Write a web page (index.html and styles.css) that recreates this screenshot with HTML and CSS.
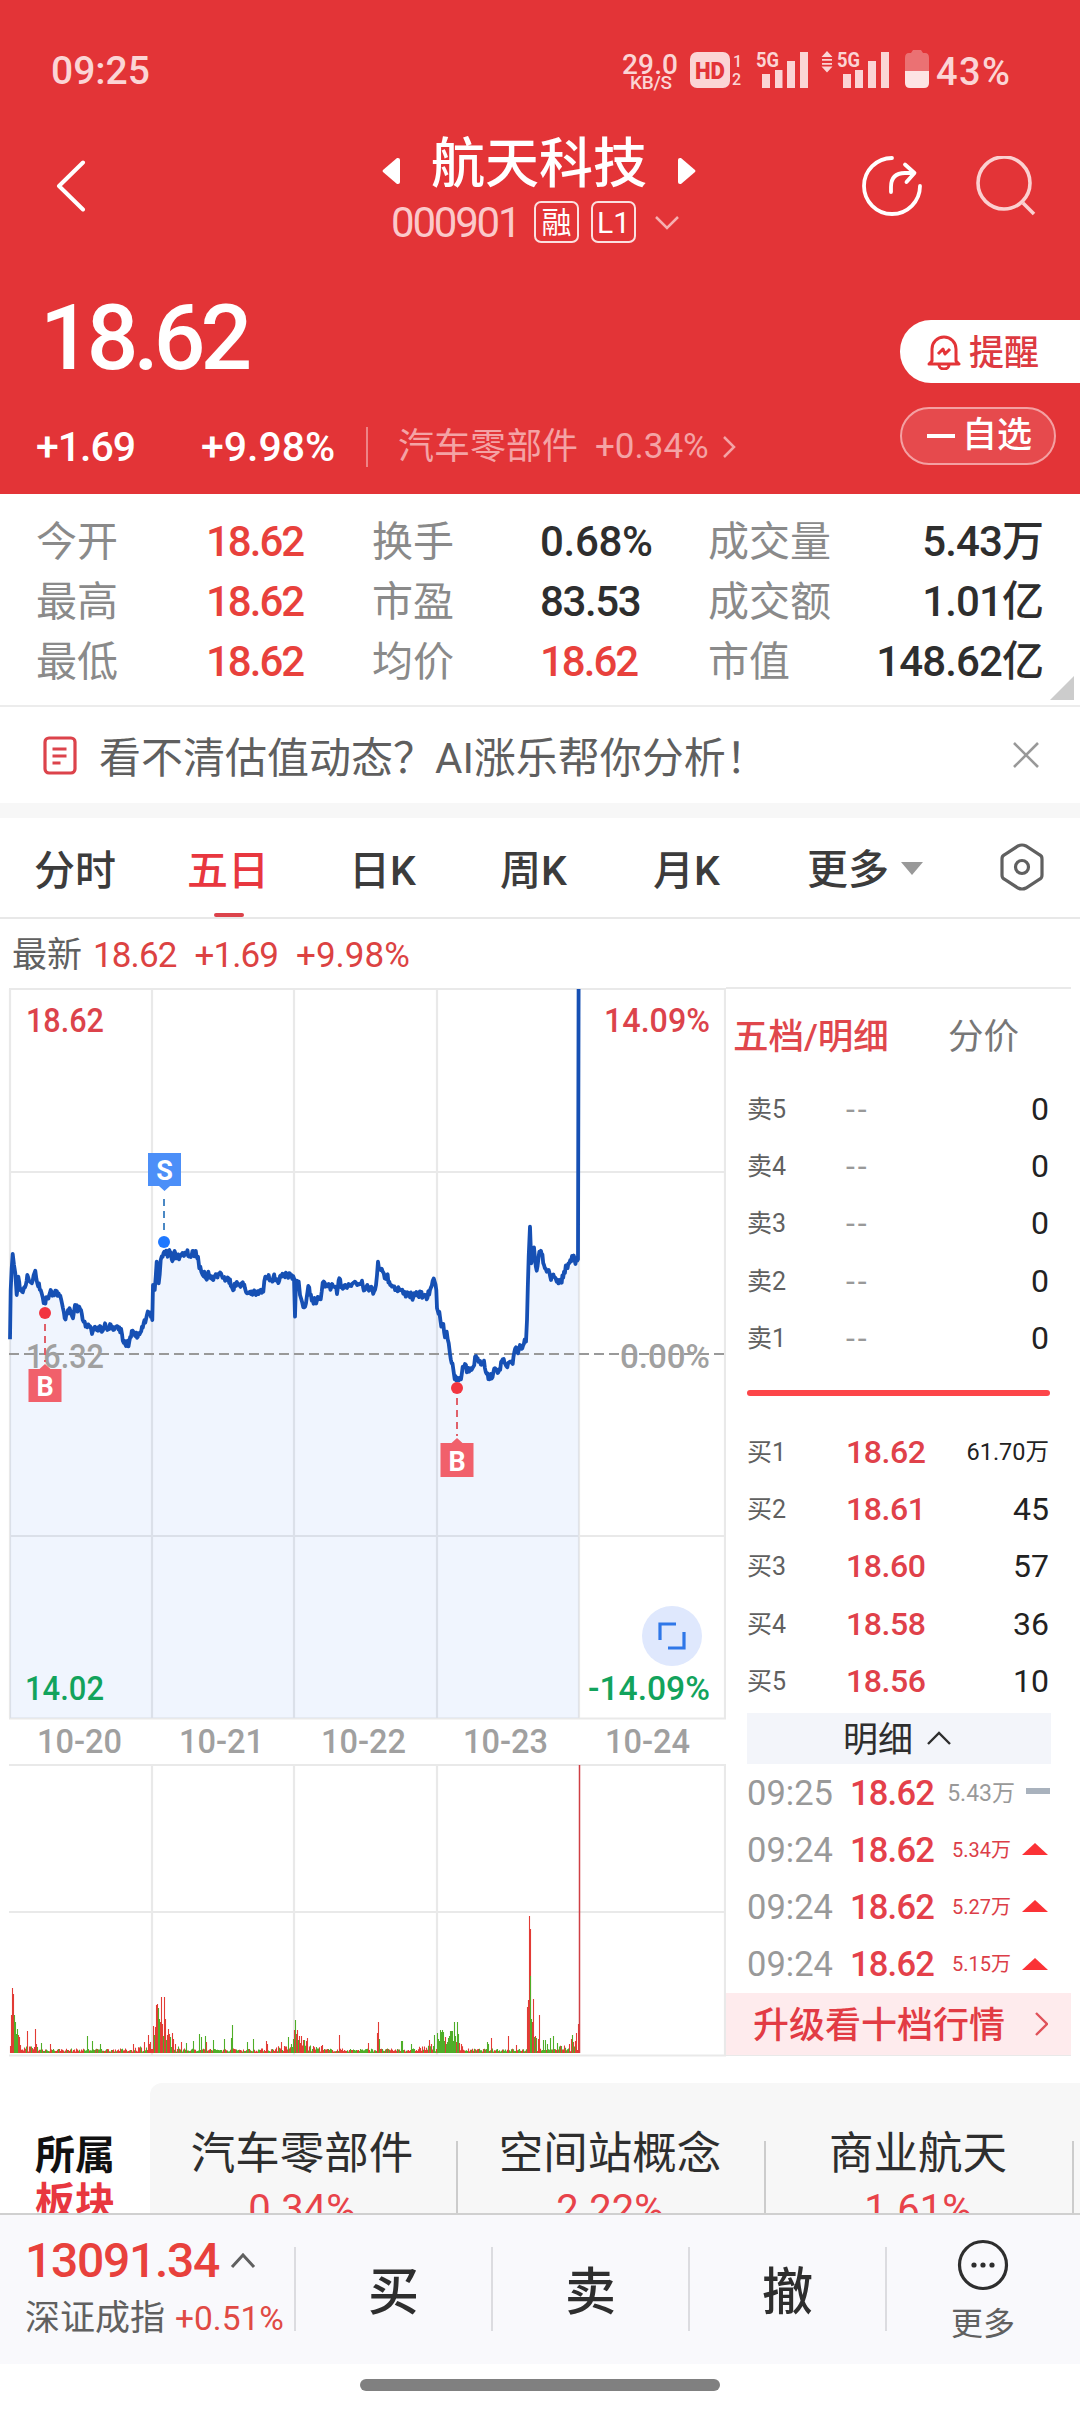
FILE: index.html
```html
<!DOCTYPE html>
<html lang="zh-CN">
<head>
<meta charset="utf-8">
<title>航天科技 000901</title>
<link rel="stylesheet" href="styles.css">
</head>
<body>
<div class="app">
  <header class="header">
    <div class="statusbar">
      <span class="clock">09:25</span>
      <svg class="status-icons" width="410" height="46" viewBox="615 46 410 46">
        <text x="622" y="73.5" font-size="28" font-weight="500" textLength="56">29.0</text>
        <text x="630" y="89" font-size="19" font-weight="500" textLength="42">KB/S</text>
        <rect x="690" y="52" width="40" height="36" rx="7"/>
        <text class="cut" x="695" y="79" font-size="24" font-weight="900" textLength="30" lengthAdjust="spacingAndGlyphs">HD</text>
        <text x="733" y="67" font-size="16" font-weight="500">1</text>
        <text x="732" y="84.500" font-size="16" font-weight="500">2</text>
        <text x="756" y="67" font-size="21" font-weight="700" textLength="23" lengthAdjust="spacingAndGlyphs">5G</text>
        <path d="M762 74h8v14h-8zM775 70h7.500v18h-7.500zM787 61h8v27h-8zM800 52h8v36h-8z"/>
        <path d="M827 51l5.500 6h-11zM827 72.500l5.500-6h-11zM822 59h10v1.800h-10zM822 63h10v1.800h-10z"/>
        <text x="837" y="67" font-size="21" font-weight="700" textLength="23" lengthAdjust="spacingAndGlyphs">5G</text>
        <path d="M843 74h8v14h-8zM855 70h8v18h-8zM868 61h8v27h-8zM881 52h8v36h-8z"/>
        <path opacity=".38" d="M913 50h8l2 3h2q4 0 4 5v13h-24v-13q0-5 4-5h2z"/>
        <path class="charge" d="M905 71h24v12q0 5-5 5h-14q-5 0-5-5z"/>
        <text x="936" y="85" font-size="38" font-weight="500" textLength="74">43%</text>
      </svg>
    </div>
    <div class="nav">
      <svg class="back" width="32" height="52" viewBox="0 0 32 52"><path d="M29 2.500L5 26l24 23.500"/></svg>
      <div class="stock">
        <div class="stock-name">
          <svg width="18" height="28" viewBox="0 0 18 28"><path d="M18 3v22q0 2-2 2h-1L1 15q-1-1 0-2L15 1h1q2 0 2 2z"/></svg>
          <h1>航天科技</h1>
          <svg width="18" height="28" viewBox="0 0 18 28"><path d="M0 3v22q0 2 2 2h1l14-12q1-1 0-2L3 1H2Q0 1 0 3z"/></svg>
        </div>
        <div class="stock-code">
          <span class="code">000901</span><span class="badge">融</span><span class="badge">L1</span>
          <svg width="24" height="14" viewBox="0 0 24 14"><path d="M1 1l11 11L23 1"/></svg>
        </div>
      </div>
      <div class="nav-tools">
        <svg class="share" width="60" height="60" viewBox="0 0 60 60"><path d="M30 2A28 28 0 1 0 58 30M29 36v-5q0-14 14-14h9M43 8.500l9.500 8.500-8 9"/></svg>
        <svg class="search" width="60" height="60" viewBox="0 0 60 60"><circle cx="28" cy="27" r="26"/><path d="M47 47l11 11"/></svg>
      </div>
    </div>
    <div class="quote">
      <div class="price">18.62</div>
      <div class="alert-btn">
        <svg width="34" height="36" viewBox="0 0 34 36"><path d="M5 27V15a12 12 0 0 1 24 0v12l3 3H2zM12 31a5 4 0 0 0 10 0M11 20l5-5 2 5 5-5"/></svg>
        <span>提醒</span>
      </div>
    </div>
    <div class="change">
      <span class="delta">+1.69</span><span class="delta-pct">+9.98%</span><i class="bar"></i>
      <span class="sector">汽车零部件</span><span class="sector-pct">+0.34%</span>
      <svg width="14" height="24" viewBox="0 0 14 24"><path d="M2 2l10 10L2 22"/></svg>
      <div class="watch-btn"><i></i>自选</div>
    </div>
  </header>

  <section class="stats">
    <span class="k">今开</span><span class="v up">18.62</span><span class="k">换手</span><span class="v pct">0.68%</span><span class="k">成交量</span><span class="v r">5.43万</span>
    <span class="k">最高</span><span class="v up">18.62</span><span class="k">市盈</span><span class="v">83.53</span><span class="k">成交额</span><span class="v r">1.01亿</span>
    <span class="k">最低</span><span class="v up">18.62</span><span class="k">均价</span><span class="v up">18.62</span><span class="k">市值</span><span class="v r">148.62亿</span>
    <i class="corner"></i>
  </section>

  <section class="tip">
    <svg width="34" height="40" viewBox="0 0 34 40"><rect x="2" y="2" width="30" height="35" rx="4"/><path d="M9.500 13h14M9.500 20h14M9.500 27h8"/></svg>
    <span>看不清估值动态？AI涨乐帮你分析！</span>
    <svg class="close" width="28" height="28" viewBox="0 0 28 28"><path d="M2 2l24 24M26 2L2 26"/></svg>
  </section>

  <nav class="tabs">
    <span class="tab">分时</span><span class="tab active">五日</span><span class="tab">日K</span><span class="tab">周K</span><span class="tab">月K</span>
    <span class="tab more">更多<i></i></span>
    <svg class="gear" width="44" height="48" viewBox="0 0 44 48"><path d="M22 2q2 0 4 1l14 9q2 1 2 4v16q0 3-2 4l-14 9q-4 2-8 0L4 36q-2-1-2-4V16q0-3 2-4l14-9q2-1 4-1z"/><circle cx="22" cy="24" r="6.500"/></svg>
  </nav>

  <div class="latest"><span class="lbl">最新</span><span>18.62</span><span>+1.69</span><span class="wide">+9.98%</span></div>

  <main class="market">
    <svg class="chart" width="726" height="1070" viewBox="0 987 726 1070">
      <g class="grid">
        <path d="M9 989H726M10 1172H725M10 1536H725M9 1718.500H726M9 1765H726M9 1912H725M9 2055.500H726"/>
        <path d="M10 989v729M152 989v729M294 989v729M437 989v729M579 989v729M725 989v729M152 1765v290M294 1765v290M437 1765v290M725 1765v290"/>
      </g>
      <path id="area" class="area"/>
      <path class="mid" d="M9 1354H724"/>
      <path id="line" class="line"/>
      <path id="volUp" class="vol-up"/>
      <path id="volDown" class="vol-down"/>
      <path class="vol-last" d="M579.500 1765V2053"/>
      <g class="axis">
        <text class="c-up" x="26" y="1032" textLength="78" lengthAdjust="spacingAndGlyphs">18.62</text>
        <text class="c-up" x="604" y="1032" textLength="106" lengthAdjust="spacingAndGlyphs">14.09%</text>
        <text class="c-mid" x="26" y="1368" textLength="78" lengthAdjust="spacingAndGlyphs">16.32</text>
        <text class="c-mid" x="620" y="1368" textLength="90" lengthAdjust="spacingAndGlyphs">0.00%</text>
        <text class="c-down" x="25" y="1700" textLength="79" lengthAdjust="spacingAndGlyphs">14.02</text>
        <text class="c-down" x="588" y="1700" textLength="122" lengthAdjust="spacingAndGlyphs">-14.09%</text>
        <text class="c-mid" x="37" y="1753" textLength="85" lengthAdjust="spacingAndGlyphs">10-20</text>
        <text class="c-mid" x="179" y="1753" textLength="85" lengthAdjust="spacingAndGlyphs">10-21</text>
        <text class="c-mid" x="321" y="1753" textLength="85" lengthAdjust="spacingAndGlyphs">10-22</text>
        <text class="c-mid" x="463" y="1753" textLength="85" lengthAdjust="spacingAndGlyphs">10-23</text>
        <text class="c-mid" x="605" y="1753" textLength="85" lengthAdjust="spacingAndGlyphs">10-24</text>
      </g>
      <g class="mark-s">
        <path class="lead" d="M164 1199v36"/><circle cx="164" cy="1242" r="6"/>
        <path d="M148 1153h33v33h-11l-5.500 5-5.500-5h-11z"/><text x="164.500" y="1180">S</text>
      </g>
      <g class="mark-b">
        <path class="lead" d="M45 1324v38"/><circle cx="45" cy="1313" r="6"/>
        <path d="M28.500 1369h11l5.500-5 5.500 5h11v33h-33z"/><text x="45" y="1396">B</text>
      </g>
      <g class="mark-b">
        <path class="lead" d="M457 1398v38"/><circle cx="457" cy="1388" r="6"/>
        <path d="M440.500 1443h11l5.500-5 5.500 5h11v34h-33z"/><text x="457" y="1471">B</text>
      </g>
      <g class="expand"><circle cx="672" cy="1636" r="30"/><path d="M676 1624h-16v16M684 1632v16h-16"/></g>
    </svg>

    <aside class="book">
      <div class="book-tabs"><span class="on">五档/明细</span><span>分价</span></div>
      <div class="row"><span>卖5</span><span class="none">--</span><b>0</b></div>
      <div class="row"><span>卖4</span><span class="none">--</span><b>0</b></div>
      <div class="row"><span>卖3</span><span class="none">--</span><b>0</b></div>
      <div class="row"><span>卖2</span><span class="none">--</span><b>0</b></div>
      <div class="row"><span>卖1</span><span class="none">--</span><b>0</b></div>
      <div class="ratio"></div>
      <div class="row"><span>买1</span><em>18.62</em><b class="small">61.70万</b></div>
      <div class="row"><span>买2</span><em>18.61</em><b>45</b></div>
      <div class="row"><span>买3</span><em>18.60</em><b>57</b></div>
      <div class="row"><span>买4</span><em>18.58</em><b>36</b></div>
      <div class="row"><span>买5</span><em>18.56</em><b>10</b></div>
      <div class="detail-head"><span>明细</span><svg width="24" height="14" viewBox="0 0 24 14"><path d="M1 13L12 2l11 11"/></svg></div>
      <div class="tick"><span>09:25</span><em>18.62</em><b class="flat">5.43万</b><i class="dash"></i></div>
      <div class="tick"><span>09:24</span><em>18.62</em><b>5.34万</b><i class="tri"></i></div>
      <div class="tick"><span>09:24</span><em>18.62</em><b>5.27万</b><i class="tri"></i></div>
      <div class="tick"><span>09:24</span><em>18.62</em><b>5.15万</b><i class="tri"></i></div>
      <div class="upgrade"><span>升级看十档行情</span><svg width="14" height="24" viewBox="0 0 14 24"><path d="M2 1l11 11L2 23"/></svg></div>
    </aside>
  </main>

  <section class="sectors">
    <div class="sectors-title"><span>所属</span><span class="red">板块</span></div>
    <div class="sectors-list">
      <div class="item"><span>汽车零部件</span><em>0.34%</em></div>
      <div class="item"><span>空间站概念</span><em>2.22%</em></div>
      <div class="item"><span>商业航天</span><em>1.61%</em></div>
    </div>
  </section>

  <footer class="trade">
    <div class="index">
      <div class="index-val">13091.34<svg width="26" height="16" viewBox="0 0 26 16"><path d="M2 14L13 2l11 12"/></svg></div>
      <div class="index-name">深证成指<em>+0.51%</em></div>
    </div>
    <div class="act">买</div><div class="act">卖</div><div class="act">撤</div>
    <div class="act-more">
      <svg width="52" height="52" viewBox="0 0 52 52"><circle class="ring" cx="26" cy="26" r="23.500"/><circle cx="17" cy="26" r="2.600"/><circle cx="26" cy="26" r="2.600"/><circle cx="35" cy="26" r="2.600"/></svg>
      <span>更多</span>
    </div>
  </footer>
  <div class="home"><i></i></div>
</div>
<script src="chart.js"></script>
</body>
</html>
```
FILE: styles.css
```css
* { box-sizing: border-box; margin: 0; padding: 0; }
body {
  width: 1080px;
  background: #fff;
  font-family: Roboto, "Noto Sans CJK SC", sans-serif;
  color: #2e2e2e;
}
.app { width: 1080px; height: 2412px; display: flex; flex-direction: column; overflow: hidden; }
.app > * { flex: none; }
svg { display: block; fill: none; flex: none; }
em, i { font-style: normal; }
span, em, b { white-space: nowrap; }

/* header */
.header { height: 494px; background: #e33437; color: #fff; }
.statusbar { height: 118px; padding: 24px 55px 0 51px; display: flex; justify-content: space-between; align-items: center; }
.clock { font-size: 39px; font-weight: 500; color: #fbd5d5; line-height: 46px; }
.status-icons { fill: #fbd5d5; margin-top: -4px; }
.status-icons .cut { fill: #e33437; }
.status-icons .charge { fill: #fde4e4; }
.nav { height: 136px; display: flex; padding: 0 44px 0 54px; justify-content: space-between; }
.back { stroke: #fff; stroke-width: 4; margin-top: 42px; stroke-linecap: round; stroke-linejoin: round; }
.stock { width: 320px; margin-left: 136px; }
.stock-name { display: flex; align-items: center; height: 79px; gap: 31px; padding-top: 15px; }
.stock-name svg { fill: #fff; margin-top: 11px; }
.stock-name h1 { font-size: 54px; font-weight: 500; line-height: 64px; width: 216px; }
.stock-code { display: flex; align-items: center; height: 50px; padding: 2px 0 0 9px; }
.code { font-size: 42px; letter-spacing: -2.200px; color: #fbc9ca; width: 143px; line-height: 46px; }
.badge { width: 45px; height: 42px; border: 2px solid #fbe0e0; border-radius: 7px; font-size: 30px; line-height: 39px; text-align: center; margin-right: 12px; margin-top: -3px; }
.stock-code svg { stroke: #f6b0b1; stroke-width: 2.500; margin-left: 7px; }
.nav-tools { display: flex; gap: 54px; margin-top: 38px; }
.share { stroke: #fff; stroke-width: 3.800; stroke-linecap: round; stroke-linejoin: round; }
.search { stroke: #fbd0d0; stroke-width: 3.600; }
.quote { height: 146px; display: flex; justify-content: space-between; align-items: flex-start; }
.price { font-size: 91px; font-weight: 500; letter-spacing: -5px; line-height: 100px; margin: 34px 0 0 40px; }
.alert-btn { margin-top: 66px; width: 180px; height: 63px; background: #fff; border-radius: 31px 0 0 31px; display: flex; align-items: center; padding-left: 27px; gap: 8px; color: #dd3a41; font-size: 35px; font-weight: 500; line-height: 63px; }
.alert-btn svg { stroke: #e33437; stroke-width: 3; stroke-linejoin: round; }
.alert-btn span { padding-top: 3px; }
.change { display: flex; align-items: center; height: 94px; padding-left: 36px; font-size: 41px; font-weight: 500; }
.delta { width: 165px; letter-spacing: -1px; }
.delta-pct { width: 165px; }
.change > span { line-height: 48px; }
.bar { width: 2px; height: 40px; background: #ee8486; }
.change .sector { font-size: 36px; font-weight: 400; color: #f4a3a5; margin-left: 30px; width: 197px; }
.change .sector-pct { font-size: 35px; font-weight: 400; color: #f4a3a5; width: 127px; }
.change > svg { stroke: #f4a3a5; stroke-width: 2.500; }
.watch-btn { margin-left: 164px; margin-top: -22px; width: 156px; height: 58px; border: 2px solid #f4a0a2; border-radius: 29px; background: #e64a4d; font-size: 35px; line-height: 58px; display: flex; align-items: center; padding-left: 25px; gap: 7px; white-space: nowrap; }
.watch-btn i { width: 28px; height: 3.500px; background: #fff; }

/* key figures */
.stats { position: relative; height: 213px; padding: 18px 38px 0 36px; border-bottom: 2px solid #ececec; display: grid; grid-template-columns: 170px 166px 168px 168px 120px 1fr; grid-auto-rows: 60px; line-height: 60px; font-size: 41px; }
.k { color: #8a8a8a; }
.v { font-weight: 500; font-size: 42px; letter-spacing: -1.400px; }
.v.up { color: #e8413c; letter-spacing: -2px; }
.v.pct { letter-spacing: -.300px; }
.v.r { text-align: right; letter-spacing: -.900px; margin-right: -1px; }
.corner { position: absolute; right: 6px; bottom: 5px; border-left: 24px solid transparent; border-bottom: 24px solid #ccc; }

/* hint */
.tip { height: 111px; border-bottom: 15px solid #f7f7f7; display: flex; align-items: center; padding: 4px 40px 0 43px; font-size: 42px; color: #5f5f5f; }
.tip svg { stroke: #dc434b; stroke-width: 3.200; margin-top: -3px; }
.tip span { margin-left: 22px; flex: 1; line-height: 60px; padding-top: 3px; }
.tip .close { stroke: #999; stroke-width: 2.600; margin-top: -4px; }

/* period tabs */
.tabs { height: 101px; border-bottom: 2px solid #e8e8e8; display: flex; align-items: center; font-size: 41px; line-height: 99px; color: #3c3c3c; padding-left: 34px; font-weight: 500; }
.tab { position: relative; width: 153px; height: 99px; padding-top: 4px; }
.tab:nth-child(2) { width: 162px; }
.tab:nth-child(3) { width: 151px; }
.tab.active { color: #e8373f; }
.tab.active::after { content: ""; position: absolute; left: 27px; bottom: 0; width: 30px; height: 4px; background: #dc434b; border-radius: 2px; }
.tab.more { display: flex; align-items: center; gap: 12px; width: 194px; padding: 4px 0 0 1px; line-height: 104px; }
.tab.more i { border: 11px solid transparent; border-top: 13px solid #999; border-bottom: 0; margin-top: -2px; }
.gear { stroke: #606060; stroke-width: 3.200; margin-top: -1px; }

.latest { height: 68px; display: flex; align-items: center; padding: 6px 0 0 12px; font-size: 35px; color: #dc4242; line-height: 64px; letter-spacing: -.900px; }
.latest span { margin-right: 18px; }
.latest .lbl { color: #606060; margin-right: 11px; letter-spacing: 0; }
.latest .wide { letter-spacing: 0; }

/* chart */
.market { display: flex; height: 1070px; }
.grid { stroke: #e9e9e9; stroke-width: 2.200; }
.area { fill: #2f6ff6; fill-opacity: .07; }
.line { stroke: #1650b4; stroke-width: 3.800; stroke-linejoin: round; }
.mid { stroke: #999; stroke-width: 2; stroke-dasharray: 10 5; }
.vol-up { stroke: #e23b35; stroke-width: 1.100; }
.vol-down { stroke: #4fae28; stroke-width: 1.100; }
.vol-last { stroke: #cf3f44; stroke-width: 1.500; }
.axis text { font-size: 33px; font-weight: 500; }
.c-up { fill: #dc434b; }
.c-mid { fill: #a0a0a0; }
.c-down { fill: #12a35c; }
.mark-s { fill: #4c8ff8; }
.mark-b { fill: #f1606b; }
.mark-b circle { fill: #f23540; }
.mark-s circle { fill: #1f78ff; }
.mark-s text, .mark-b text { fill: #fff; font-size: 27px; font-weight: 700; text-anchor: middle; }
.lead { stroke-width: 2; stroke-dasharray: 7 5; }
.mark-s .lead { stroke: #4a88c4; }
.mark-b .lead { stroke: #e0606a; }
.expand circle { fill: #dfe8fd; }
.expand path { stroke: #2f77e8; stroke-width: 3.200; }

/* order book */
.book { width: 345px; height: 1069px; border-top: 2px solid #e9e9e9; border-bottom: 2px solid #e9e9e9; }
.book-tabs { display: flex; justify-content: space-between; height: 92px; padding: 2px 52px 0 7px; font-size: 35.500px; line-height: 92px; color: #777; }
.book-tabs .on { color: #e0474c; font-weight: 500; }
.row { display: grid; grid-template-columns: 99px 100px 1fr; height: 57.200px; line-height: 57.200px; padding: 0 22px 0 21px; align-items: center; font-size: 25px; color: #606060; }
.row em { font-size: 32px; color: #e0414a; font-weight: 500; letter-spacing: -.400px; }
.row b { font-size: 32px; font-weight: 400; color: #222; text-align: right; }
.row b.small { font-size: 23.500px; margin-left: -30px; }
.row .none { font-size: 32px; color: #999; letter-spacing: 3px; }
.ratio { height: 6px; margin: 23px 21px 28px; border-radius: 3px; background: #fd4549; }
.detail-head { margin: 3px 20px 0 21px; height: 51px; background: #f3f5fa; display: flex; align-items: center; justify-content: center; gap: 14px; padding-right: 4px; font-size: 35px; line-height: 51px; color: #2e2e2e; }
.detail-head span { padding-top: 5px; }
.detail-head svg { stroke: #2e2e2e; stroke-width: 2.400; }
.tick { position: relative; top: 1px; display: grid; grid-template-columns: 103px 90px 1fr 35px; height: 57.200px; line-height: 57.200px; padding: 0 21px 0 21px; align-items: center; font-size: 34.500px; color: #999; }
.tick em { color: #e4404a; font-weight: 500; letter-spacing: -.800px; }
.tick b { font-weight: 400; font-size: 20px; color: #dc3e48; text-align: right; padding-right: 4px; margin-left: -20px; }
.tick b.flat { font-size: 23px; color: #999; padding-right: 0; }
.tick i { justify-self: end; }
.dash { width: 24px; height: 6px; background: #a9b2bd; margin-top: -4px; }
.tri { border: 13px solid transparent; border-bottom: 12px solid #fb3236; border-top: 0; margin-right: 2px; margin-top: -3px; }
.upgrade { height: 62px; background: #feebed; display: flex; align-items: center; justify-content: space-between; padding: 0 23px 0 27px; font-size: 36px; line-height: 62px; color: #e23b44; font-weight: 500; }
.upgrade span { padding-top: 4px; }
.upgrade svg { stroke: #e0525a; stroke-width: 2.400; }

/* related sectors */
.sectors { display: flex; height: 156px; padding-top: 26px; overflow: hidden; }
.sectors-title { width: 150px; flex: none; padding: 49px 0 0 35px; display: flex; flex-direction: column; font-size: 40px; line-height: 47px; font-weight: 700; color: #111; }
.sectors-title .red { color: #e8373f; }
.sectors-list { flex: 1; display: flex; background: #f7f7f7; border-radius: 12px 0 0 0; overflow: hidden; }
.item { position: relative; width: 308px; flex: none; text-align: center; display: flex; flex-direction: column; padding: 43px 4px 0 0; font-size: 44.500px; line-height: 56px; color: #2e2e2e; }
.item em { font-size: 40px; line-height: 56px; color: #e8434a; }
.item::after { content: ""; position: absolute; right: 0; top: 58px; bottom: 0; width: 2px; background: #ccc; }

/* trade bar */
.trade { display: flex; height: 151px; background: #f9f9fc; border-top: 2px solid #d0d0d0; }
.index { width: 295px; padding: 18px 0 0 25px; }
.index-val { display: flex; align-items: center; gap: 11px; font-size: 48px; letter-spacing: -1.300px; line-height: 56px; color: #e8413c; font-weight: 500; }
.index-val svg { stroke: #606060; stroke-width: 3; }
.index-name { display: flex; align-items: center; gap: 10px; font-size: 35px; line-height: 60px; color: #606060; }
.index-name em { font-size: 33.500px; color: #e04a44; }
.act { position: relative; width: 197px; text-align: center; font-size: 51px; font-weight: 500; line-height: 156px; color: #2e2e2e; }
.act::before, .act-more::before { content: ""; position: absolute; left: -1px; top: 32px; width: 2px; height: 84px; background: #dcdce0; }
.act-more { position: relative; width: 194px; display: flex; flex-direction: column; align-items: center; padding-top: 24px; font-size: 32px; line-height: 48px; color: #606060; gap: 9px; }
.act-more svg { fill: #2e2e2e; }
.act-more .ring { fill: none; stroke: #2e2e2e; stroke-width: 3.200; }
.home { height: 48px; display: flex; justify-content: center; padding-top: 15px; }
.home i { width: 360px; height: 12px; border-radius: 6px; background: #808080; }
```
FILE: chart.js
```js
// Price samples in thirds of a pixel, measured from y = 1210.
const price = "30,388 32,240 38,132 42,165 46,190 50,255 55,200 60,240 66,245 75,232 82,195 90,215 98,212 106,182 112,220 122,240 128,262 134,278 143,262 152,240 160,252 166,242 178,256 186,280 194,325 204,300 213,308 219,325 225,285 235,300 243,300 248,330 254,335 262,352 270,348 276,372 285,350 293,362 300,348 308,362 315,340 322,360 330,342 340,360 348,352 358,352 366,372 371,398 378,408 388,395 398,362 406,378 416,370 426,350 436,338 446,308 455,318 457,330 459,225 464,240 470,155 476,220 482,150 488,140 493,125 499,122 503,140 508,120 515,148 526,130 532,142 545,132 552,138 560,128 570,138 585,128 594,140 598,175 604,185 608,195 613,185 618,205 625,185 632,205 645,200 655,192 663,190 670,202 678,210 690,208 697,235 706,225 715,222 726,220 735,235 741,250 750,245 760,250 768,255 778,245 790,245 796,200 806,195 812,210 820,202 830,208 838,212 845,200 855,202 862,192 872,200 882,205 885,320 888,212 896,215 900,255 904,268 910,292 918,280 925,228 930,255 938,270 946,272 956,268 962,268 968,218 976,230 986,222 994,232 1002,230 1011,252 1018,205 1026,232 1036,225 1046,222 1054,228 1064,215 1074,222 1086,212 1094,240 1102,225 1112,238 1122,245 1128,225 1134,155 1142,180 1148,185 1154,205 1160,195 1168,215 1178,228 1190,235 1200,238 1212,252 1225,250 1240,262 1252,255 1262,250 1272,258 1280,268 1290,240 1298,212 1304,215 1309,240 1311,295 1318,305 1324,350 1330,342 1335,382 1340,365 1346,400 1350,432 1355,460 1360,478 1364,508 1374,510 1383,508 1388,470 1395,462 1403,486 1412,475 1420,470 1428,438 1438,452 1447,460 1452,452 1460,492 1468,508 1480,488 1490,480 1498,478 1506,452 1516,462 1522,472 1530,455 1538,462 1548,412 1554,430 1560,405 1567,415 1574,388 1578,395 1581,330 1586,140 1590,50 1594,160 1602,112 1610,182 1618,125 1625,132 1632,165 1640,185 1646,180 1653,210 1662,200 1670,215 1678,218 1685,218 1692,185 1700,172 1708,160 1716,138 1724,152 1734,148"
  .split(" ").map(p => p.split(",").map(Number));

let seed = 7;
const rnd = () => (seed = (seed * 16807) % 2147483647) / 2147483647;

// Minute-level wiggle between the sampled turning points.
const pts = [];
price.forEach(([x, y], i) => {
  if (i) {
    const [px, py] = price[i - 1];
    const n = Math.floor((x - px) / 2.2);
    for (let k = 1; k < n; k++) {
      pts.push([px + (x - px) * k / n, py + (y - py) * k / n + (rnd() - .5) * 22]);
    }
  }
  pts.push([x, y]);
});
const d = "M" + pts.map(([x, y]) => (x / 3).toFixed(1) + " " + (1210 + y / 3).toFixed(1)).join("L") + "L578.6 989";
document.getElementById("line").setAttribute("d", d);
document.getElementById("area").setAttribute("d", d + "V1718H10Z");

// Volume: [x, height, 1 = rising / 0 = falling]
const spikes = [[10,7,1],[11,38,1],[12,65,1],[13,59,1],[14,38,0],[15,31,0],[16,19,0],[17,24,0],[18,18,1],[19,16,1],[20,8,1],[27,22,1],[35,24,1],[36,9,1],[41,10,0],[50,9,1],[87,17,0],[92,12,0],[100,9,0],[133,9,1],[144,11,1],[148,18,1],[149,9,1],[150,11,1],[153,27,1],[154,18,0],[155,26,1],[156,48,1],[157,49,1],[158,45,0],[159,34,0],[160,31,1],[161,56,1],[162,29,1],[163,17,0],[164,56,1],[165,34,1],[166,13,0],[167,18,1],[168,24,1],[169,19,1],[170,16,0],[172,20,1],[173,14,1],[175,9,1],[181,11,1],[186,10,0],[193,12,0],[199,19,0],[201,16,0],[205,17,0],[206,11,1],[213,13,0],[224,14,0],[231,15,0],[232,28,0],[247,11,0],[253,14,0],[266,12,1],[267,9,1],[281,11,1],[288,16,0],[291,9,0],[293,14,0],[294,23,1],[295,33,0],[296,19,1],[297,23,1],[298,13,0],[299,17,1],[300,10,1],[301,17,1],[303,13,1],[304,13,0],[306,12,1],[307,15,1],[322,8,1],[339,18,1],[368,10,1],[377,20,1],[378,31,1],[379,14,0],[401,12,0],[402,12,0],[411,9,0],[429,13,1],[431,9,1],[434,18,0],[437,20,0],[438,14,0],[439,12,0],[440,23,0],[441,21,0],[442,23,0],[443,21,0],[444,12,0],[445,16,1],[446,9,0],[447,11,0],[448,15,0],[449,17,0],[450,22,0],[451,22,0],[452,22,0],[453,12,0],[454,31,0],[455,17,0],[456,11,1],[457,31,0],[458,19,0],[459,10,1],[461,9,1],[487,11,0],[488,9,0],[491,15,1],[508,17,1],[516,8,1],[527,46,1],[528,53,1],[529,137,1],[530,124,1],[531,34,0],[532,31,1],[533,54,1],[534,16,0],[535,17,1],[536,15,0],[538,14,1],[539,38,1],[543,13,0],[545,13,0],[547,9,0],[550,15,0],[553,17,0],[557,10,0],[569,9,1],[571,14,1],[572,18,0],[573,11,1],[575,12,1],[576,20,1],[578,29,1],[579,29,1]];
const bars = { 0: "M530.5 2053v-77", 1: "" };
const peak = new Map(spikes.map(s => [s[0], s]));
for (let x = 10; x < 579; x++) {
  const phase = (x - 10) % 142;
  const busy = phase < 28 || phase > 122 ? 6 : 3;
  const h = 1.5 + rnd() * busy;
  const up = rnd() > (phase > 45 && phase < 90 ? .55 : .4) ? 1 : 0;
  const s = peak.get(x) || [x, h, up];
  bars[s[2]] += `M${x + .5} 2053v-${s[1].toFixed(1)}`;
}
document.getElementById("volUp").setAttribute("d", bars[1]);
document.getElementById("volDown").setAttribute("d", bars[0]);
```
